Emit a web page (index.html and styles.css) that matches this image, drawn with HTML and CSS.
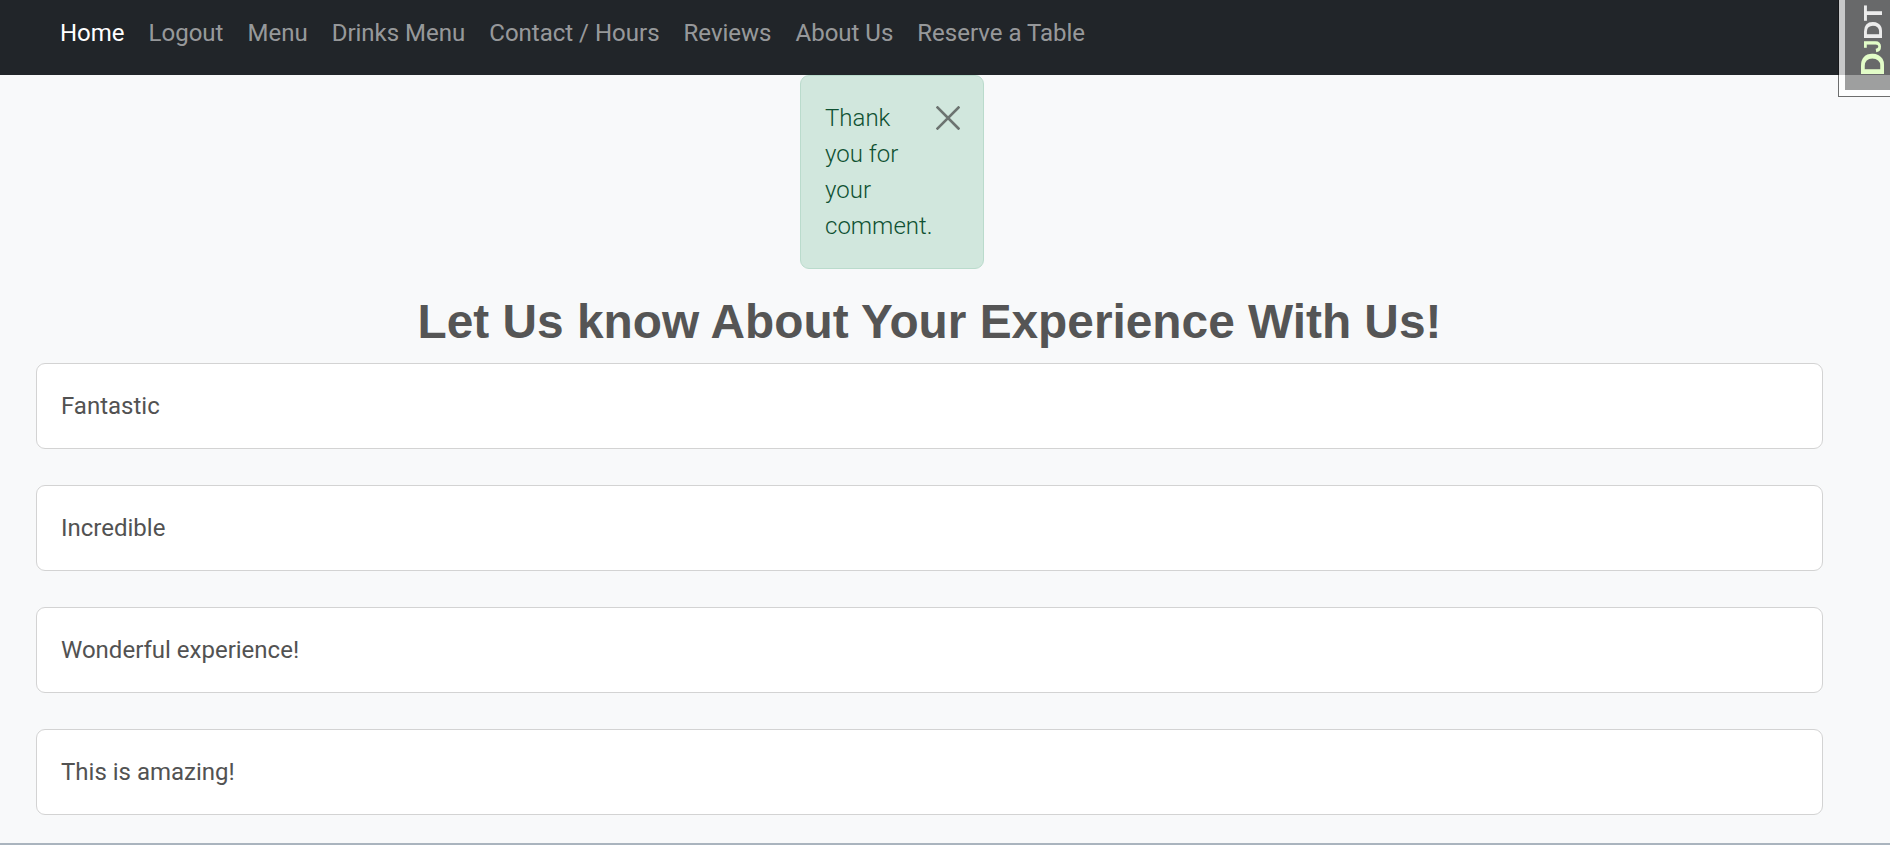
FILE: index.html
```html
<!DOCTYPE html>
<html lang="en">
<head>
<meta charset="utf-8">
<title>Reviews</title>
<link rel="stylesheet" href="styles.css">
</head>
<body>
<nav class="navbar">
  <ul class="nav-list">
    <li><a class="nav-link active" href="#">Home</a></li>
    <li><a class="nav-link" href="#">Logout</a></li>
    <li><a class="nav-link" href="#">Menu</a></li>
    <li><a class="nav-link" href="#">Drinks Menu</a></li>
    <li><a class="nav-link" href="#">Contact / Hours</a></li>
    <li><a class="nav-link" href="#">Reviews</a></li>
    <li><a class="nav-link" href="#">About Us</a></li>
    <li><a class="nav-link" href="#">Reserve a Table</a></li>
  </ul>
</nav>

<main class="page">
  <div class="alert">
    <span class="alert-text">Thank you for your comment.</span>
    <button class="btn-close" type="button" aria-label="Close">
      <svg viewBox="0 0 24 24" width="24" height="24"><path d="M1.5 1.5 L22.5 22.5 M22.5 1.5 L1.5 22.5" stroke="currentColor" stroke-width="2.6" fill="none" stroke-linecap="square"/></svg>
    </button>
  </div>

  <h2 class="title">Let Us know About Your Experience With Us!</h2>

  <div class="reviews">
    <div class="card">Fantastic</div>
    <div class="card">Incredible</div>
    <div class="card">Wonderful experience!</div>
    <div class="card">This is amazing!</div>
  </div>
</main>
<footer class="footer"></footer>

<div class="djdt-handle">
  <div class="djdt-btn">
    <span class="djdt-text"><span class="djdt-d">D</span><span class="djdt-j">J</span>DT</span>
  </div>
</div>
</body>
</html>
```

FILE: styles.css
```css
* { box-sizing: border-box; }

html, body {
  margin: 0;
  padding: 0;
}

body {
  background: #f8f9fa;
  font-family: Roboto, "Liberation Sans", sans-serif;
  font-size: 24px;
  line-height: 1.5;
  color: #555555;
  height: 845px;
}

.navbar {
  background: #212529;
  height: 75px;
  padding: 15px 0 0 48px;
}

.nav-list {
  list-style: none;
  margin: 0;
  padding: 0;
  display: flex;
}

.nav-link {
  display: block;
  padding: 0 12px;
  color: rgba(255, 255, 255, 0.55);
  text-decoration: none;
  line-height: 36px;
}

.nav-link.active {
  color: #ffffff;
}

.page {
  padding: 0 67px 0 36px;
}

.alert {
  position: relative;
  width: 184px;
  margin: 0 0 24px 764px;
  padding: 24px 54px 24px 24px;
  background: #d1e7dd;
  border: 1px solid #badbcc;
  border-radius: 9px;
  color: #0f5132;
  font-weight: 300;
}

.alert-text {
  display: block;
}

.btn-close {
  position: absolute;
  top: 30px;
  right: 23px;
  width: 24px;
  height: 24px;
  padding: 0;
  margin: 0;
  border: 0;
  background: transparent;
  color: #6c7370;
  display: flex;
}

.title {
  margin: 0 0 13px 0;
  font-family: "Liberation Sans", Arial, sans-serif;
  font-weight: bold;
  font-size: 47.8px;
  line-height: 57px;
  text-align: center;
  color: #555555;
}

.reviews {
  display: flex;
  flex-direction: column;
  gap: 36px;
}

.card {
  background: #ffffff;
  border: 1px solid #d3d3d3;
  border-radius: 9px;
  padding: 24px;
  line-height: 36px;
  color: #525252;
}

.footer {
  margin-top: 28px;
  border-top: 2px solid #aab4be;
}

.djdt-handle {
  position: fixed;
  top: 0;
  right: 0;
  width: 52px;
  height: 97px;
  border-left: 1px solid rgba(17, 17, 17, 0.6);
  border-bottom: 1px solid rgba(17, 17, 17, 0.6);
  z-index: 10;
}

.djdt-btn {
  position: relative;
  width: 51px;
  height: 96px;
  background: rgba(128, 128, 128, 0.75);
  border-left: 6px solid rgba(255, 255, 255, 0.75);
  border-bottom: 6px solid rgba(255, 255, 255, 0.75);
  background-clip: padding-box;
  overflow: hidden;
}

.djdt-text {
  position: absolute;
  left: 11px;
  bottom: 14px;
  writing-mode: vertical-rl;
  transform: rotate(180deg);
  font-family: "Liberation Sans", Arial, sans-serif;
  font-weight: bold;
  font-size: 26px;
  line-height: 1;
  color: #ececec;
  white-space: nowrap;
}

.djdt-d {
  color: #e2fcc8;
  font-size: 33px;
}

.djdt-j {
  color: #e2fcc8;
  font-size: 23px;
}
```
